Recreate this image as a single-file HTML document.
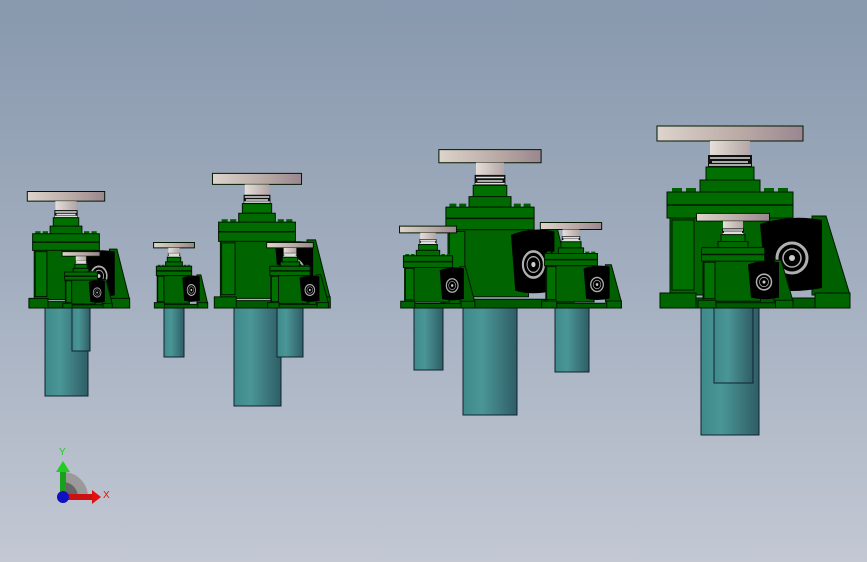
<!DOCTYPE html>
<html><head><meta charset="utf-8"><style>
html,body{margin:0;padding:0}
body{width:867px;height:562px;overflow:hidden;background:linear-gradient(#8898ad 0%,#a3afc0 50%,#c3c8d3 100%);}
svg{position:absolute;left:0;top:0}
</style></head><body>
<svg width="867" height="562" viewBox="0 0 867 562">
<defs>
<linearGradient id="pl" x1="0" x2="1"><stop offset="0" stop-color="#ddd4cc"/><stop offset=".6" stop-color="#b8a8a4"/><stop offset="1" stop-color="#9a8690"/></linearGradient>
<linearGradient id="nk" x1="0" x2="1"><stop offset="0" stop-color="#e6ded8"/><stop offset="1" stop-color="#b4a6a6"/></linearGradient>
<linearGradient id="cy" x1="0" x2="1"><stop offset="0" stop-color="#3e8a8a"/><stop offset=".35" stop-color="#4a9696"/><stop offset="1" stop-color="#2f5d66"/></linearGradient>
<g id="jack" stroke="#001800" stroke-width="1">
 <rect x="-73" y="-182" width="146" height="15" fill="url(#pl)" vector-effect="non-scaling-stroke"/>
 <rect x="-20" y="-167" width="40" height="14" fill="url(#nk)" stroke="none"/>
 <rect x="-22" y="-153" width="44" height="12" fill="#111" stroke="none"/>
 <path d="M-20 -150h40M-18 -146h36M-21 -143h42" stroke="#ddd" stroke-width="1.5" vector-effect="non-scaling-stroke"/>
 <rect x="-24" y="-141" width="48" height="13" fill="#007000" vector-effect="non-scaling-stroke"/>
 <rect x="-30" y="-128" width="60" height="12" fill="#006a00" vector-effect="non-scaling-stroke"/>
 <g fill="#006000" stroke="none"><rect x="-58" y="-120" width="10" height="4"/><rect x="-44" y="-120" width="10" height="4"/><rect x="34" y="-120" width="10" height="4"/><rect x="48" y="-120" width="10" height="4"/></g>
 <rect x="-63" y="-116" width="126" height="26" fill="#006c00" vector-effect="non-scaling-stroke"/>
 <path d="M-63 -103h126" vector-effect="non-scaling-stroke" stroke-width="1.5"/>
 <rect x="-60" y="-90" width="115" height="77" fill="#006400" vector-effect="non-scaling-stroke"/>
 <rect x="-58" y="-88" width="22" height="70" fill="#007000" vector-effect="non-scaling-stroke"/>
 <polygon points="82,-92 96,-92 120,-13 82,-13" fill="#006000" vector-effect="non-scaling-stroke"/>
 <path d="M30 -84Q60 -94 92 -88L92 -20Q60 -14 36 -20Z" fill="#000" stroke="none"/>
 <circle cx="62" cy="-50" r="15" fill="none" stroke="#b0b0b0" stroke-width="3"/>
 <circle cx="62" cy="-50" r="9" fill="none" stroke="#b0b0b0" stroke-width="1.5"/>
 <circle cx="62" cy="-50" r="3" fill="#ccc" stroke="none"/>
 <rect x="-68" y="-10" width="188" height="10" fill="#005a00" vector-effect="non-scaling-stroke"/>
 <rect x="-70" y="-15" width="36" height="15" fill="#006400" vector-effect="non-scaling-stroke"/>
 <rect x="85" y="-15" width="35" height="15" fill="#006400" vector-effect="non-scaling-stroke"/>
</g>
</defs>

<rect x="45" y="306" width="43" height="90" fill="url(#cy)" stroke="#123" stroke-width="1"/>
<use href="#jack" transform="translate(66 308) scale(.53 .64)"/>
<rect x="72" y="306" width="18" height="45" fill="url(#cy)" stroke="#123" stroke-width="1"/>
<use href="#jack" transform="translate(81 308) scale(.26 .31)"/>
<rect x="164" y="306" width="20" height="51" fill="url(#cy)" stroke="#123" stroke-width="1"/>
<use href="#jack" transform="translate(174 308) scale(.28 .36)"/>
<rect x="234" y="306" width="47" height="100" fill="url(#cy)" stroke="#123" stroke-width="1"/>
<use href="#jack" transform="translate(257 308) scale(.61 .74)"/>
<rect x="277" y="306" width="26" height="51" fill="url(#cy)" stroke="#123" stroke-width="1"/>
<use href="#jack" transform="translate(290 308) scale(.32 .36)"/>
<rect x="463" y="306" width="54" height="109" fill="url(#cy)" stroke="#123" stroke-width="1"/>
<use href="#jack" transform="translate(490 308) scale(.7 .87)"/>
<rect x="414" y="306" width="29" height="64" fill="url(#cy)" stroke="#123" stroke-width="1"/>
<use href="#jack" transform="translate(428 308) scale(.39 .45)"/>
<rect x="555" y="306" width="34" height="66" fill="url(#cy)" stroke="#123" stroke-width="1"/>
<use href="#jack" transform="translate(571 308) scale(.42 .47)"/>
<rect x="701" y="306" width="58" height="129" fill="url(#cy)" stroke="#123" stroke-width="1"/>
<use href="#jack" transform="translate(730 308) scale(1 1)"/>
<rect x="714" y="306" width="39" height="77" fill="url(#cy)" stroke="#123" stroke-width="1"/>
<use href="#jack" transform="translate(733 308) scale(.5 .52)"/>

<path d="M63 497 L63 472 A25 25 0 0 1 88 497 Z" fill="#9a9a9a"/>
<path d="M63 497 L63 482 A15 15 0 0 1 78 497 Z" fill="#666"/>
<rect x="60" y="470" width="6" height="27" fill="#1aa01a"/>
<polygon points="56,472 63,461 70,472" fill="#22cc22"/>
<rect x="63" y="494" width="30" height="6" fill="#cc1010"/>
<polygon points="92,490 101,497 92,504" fill="#e01010"/>
<circle cx="63" cy="497" r="6" fill="#1010c0"/>
<text x="59" y="455" font-family="Liberation Sans, sans-serif" font-size="10" fill="#20d020">Y</text>
<text x="103" y="498" font-family="Liberation Sans, sans-serif" font-size="10" fill="#e01010">X</text>
</svg>
</body></html>
